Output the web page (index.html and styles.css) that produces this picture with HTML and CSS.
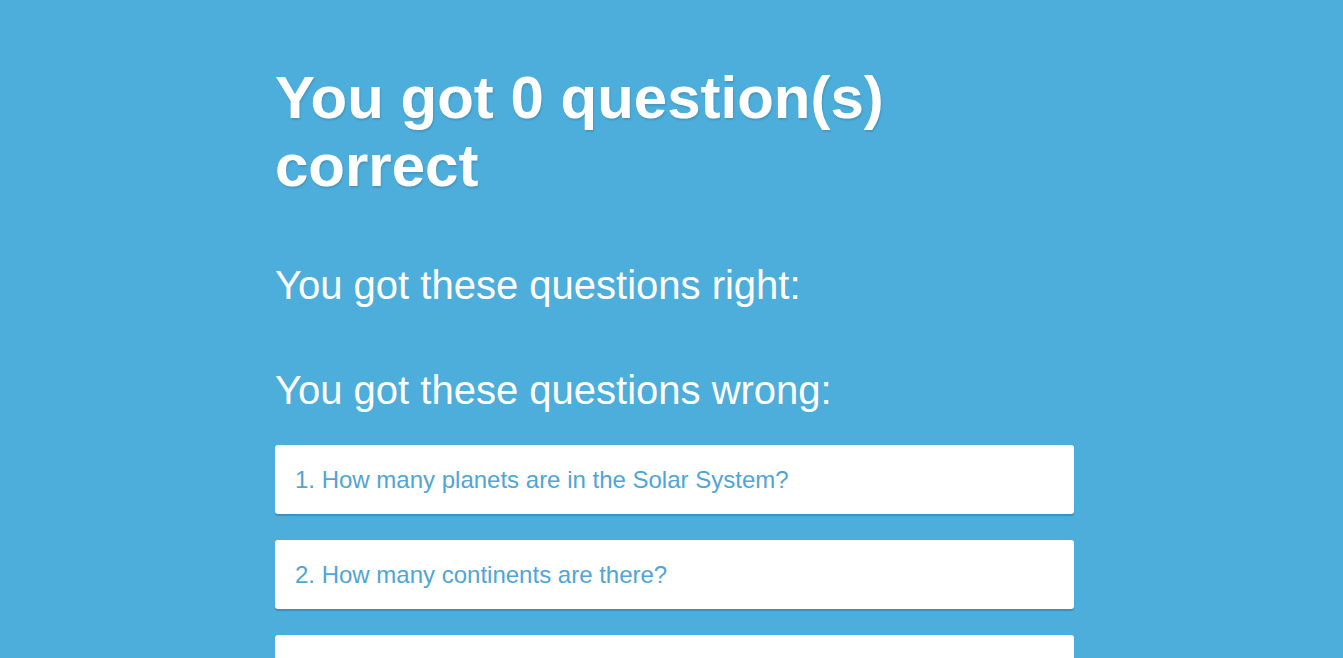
FILE: index.html
```html
<!DOCTYPE html>
<html>
<head>
<meta charset="utf-8">
<link rel="stylesheet" href="styles.css">
</head>
<body>
<main class="results">
  <h1 class="score">You got 0 question(s) correct</h1>
  <h2 class="section-title">You got these questions right:</h2>
  <ul class="question-list"></ul>
  <h2 class="section-title">You got these questions wrong:</h2>
  <ul class="question-list">
    <li class="question-card">1. How many planets are in the Solar System?</li>
    <li class="question-card">2. How many continents are there?</li>
    <li class="question-card">3. What is the largest ocean on Earth?</li>
  </ul>
</main>
</body>
</html>
```

FILE: styles.css
```css
html, body {
  margin: 0;
  padding: 0;
  background: #4daedb;
}
body {
  font-family: "Liberation Sans", Arial, sans-serif;
  color: #fff;
}
.results {
  width: 799px;
  margin: 0 0 0 275px;
  padding-top: 64px;
}
.score {
  margin: 0;
  font-size: 60px;
  font-weight: bold;
  line-height: 68px;
  width: 640px;
  text-shadow: 1px 2px 2px rgba(0, 0, 0, 0.12);
}
.section-title {
  margin: 62px 0 0;
  font-size: 40px;
  font-weight: normal;
  line-height: 46px;
}
.section-title + .section-title,
.question-list:empty + .section-title {
  margin-top: 59px;
}
.question-list {
  list-style: none;
  margin: 0;
  padding: 0;
}
.question-list:empty {
  display: none;
}
.question-list .question-card:first-child {
  margin-top: 32px;
}
.question-card {
  background: #fff;
  color: #4fa5d5;
  font-size: 24px;
  height: 69px;
  line-height: 70px;
  padding: 0 20px;
  border-radius: 3px;
  box-shadow: 0 2px 1px rgba(0, 60, 100, 0.25);
  margin-bottom: 26px;
}
```
